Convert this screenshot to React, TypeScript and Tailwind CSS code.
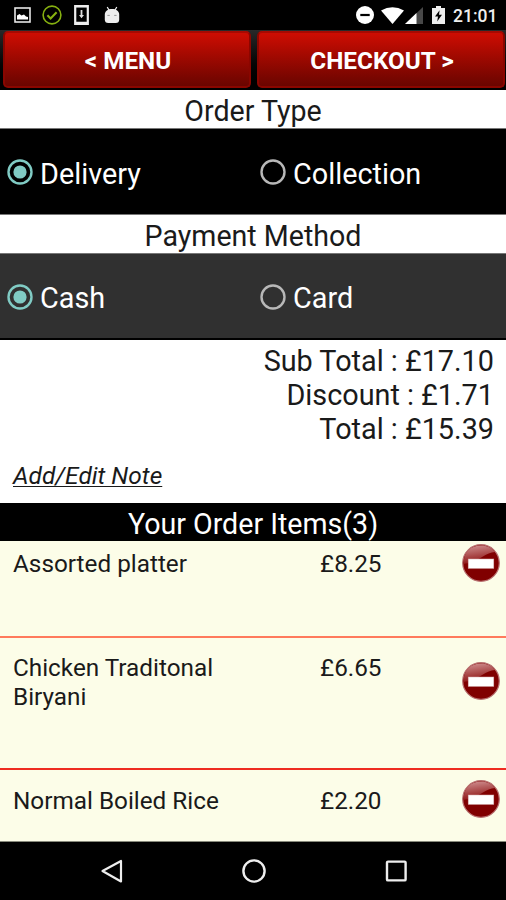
import { useState } from "react";

const items = [
  {
    name: "Assorted platter",
    price: "£8.25",
    row: "h-[96px] border-b-[2px] border-[#ff7a5c]",
    text: "pt-[7px]",
    icon: "mt-[2px]",
  },
  {
    name: "Chicken Traditonal Biryani",
    price: "£6.65",
    row: "h-[132px] border-b-[2px] border-[#ee2c20]",
    text: "pt-[15px]",
    icon: "mt-6",
  },
  {
    name: "Normal Boiled Rice",
    price: "£2.20",
    row: "h-[71px]",
    text: "pt-4",
    icon: "mt-[10px]",
  },
];

function StatusBar() {
  return (
    <div className="flex items-center h-[30px] bg-black shrink-0">
      {/* ── Notifications ── */}
      <svg className="w-[17px] h-[16px] ml-[14px]" viewBox="0 0 17 16">
        <rect x="1" y="1" width="15" height="14" fill="none" stroke="#e6e6e6" strokeWidth="1.6" />
        <path d="M3 12.6V8.6L5.6 7l1.8 1.6L10 7.4l2 2.2 2 .4v2.6z" fill="#fff" />
      </svg>
      <svg className="w-5 h-5 ml-[11px]" viewBox="0 0 20 20" fill="none" stroke="#86b010">
        <circle cx="10" cy="10" r="8.9" strokeWidth="1.6" />
        <path d="M5.4 10.2l3.2 3.2 6-6.2" strokeWidth="2.1" />
      </svg>
      <svg className="w-[15px] h-5 ml-3" viewBox="0 0 15 20">
        <rect x="1.2" y="1" width="12.6" height="18" fill="none" stroke="#eee" strokeWidth="2.2" />
        <path d="M1 1.4h13M1 18h13" stroke="#eee" strokeWidth="2.4" />
        <path d="M6.6 5h1.8v5h1.600l-2.500 3.200L5 10h1.600z" fill="#ddd" />
      </svg>
      <svg className="w-4 h-[18px] ml-[15px]" viewBox="0 0 16 18">
        <path d="M3.2 1l2 3.4M12.8 1l-2 3.4" stroke="#eee" strokeWidth="1.2" />
        <path d="M.8 8.6C.8 5 4 3 8 3s7.200 2 7.200 5.600v4.900q0 3.500-3.500 3.500H4.300Q.8 17 .8 13.500z" fill="#eee" />
        <path d="M3.400 9.400h2.400M10.200 9.400h2.400" stroke="#999" strokeWidth="1" />
      </svg>

      {/* ── System ── */}
      <svg className="w-[18px] h-[18px] ml-auto" viewBox="0 0 18 18">
        <circle cx="9" cy="9" r="9" fill="#fff" />
        <rect x="4.300" y="7.900" width="9.400" height="2.200" fill="#000" />
      </svg>
      <svg className="w-[23px] h-[17px] ml-[7px]" viewBox="0 0 23 17">
        <path d="M0 3.500Q11.500-3 23 3.500L11.500 17z" fill="#fff" />
      </svg>
      <svg className="w-[18px] h-[17px] ml-[1px]" viewBox="0 0 18 17">
        <path d="M18 0v17H0z" fill="#484848" />
        <path d="M11.500 6.100V17H0z" fill="#fff" />
      </svg>
      <svg className="w-[13px] h-[18px] ml-[9px]" viewBox="0 0 13 18">
        <path d="M4 0h5v2h4v16H0V2h4z" fill="#eee" />
        <path d="M7.600 4.200L3 10.400h3L5.200 15.400l4.800-6.600H7z" fill="#000" />
      </svg>
      <span className="ml-2 mr-[11px] w-[42px] text-[17.500px] leading-[30px] pt-[1px] font-medium text-[#eee] whitespace-nowrap">
        21:01
      </span>
    </div>
  );
}

function TopButton({ label }: { label: string }) {
  return (
    <button className="h-[57px] w-[248px] pt-[3px] pl-[2px] rounded-[5px] border-2 border-[#8a0600] border-t-[#a80a02] bg-linear-to-b from-[#cf0d02] to-[#6a0500] text-white text-[24.300px] leading-none font-bold">
      {label}
    </button>
  );
}

function SectionTitle({ label }: { label: string }) {
  return (
    <h2 className="h-[39px] shrink-0 bg-white border-b border-[#777] text-center text-[28.600px] leading-[42px] text-[#1a1a1a]">
      {label}
    </h2>
  );
}

function Radio({
  label,
  checked,
  onSelect,
}: {
  label: string;
  checked: boolean;
  onSelect: () => void;
}) {
  return (
    <button
      role="radio"
      aria-checked={checked}
      onClick={onSelect}
      className="flex items-center w-1/2 h-full pl-[7px] pt-[1px] text-[28.800px] leading-none text-white"
    >
      <svg className="w-[26px] h-[26px] mr-[7px]" viewBox="0 0 26 26">
        <circle cx="13" cy="13" r="11.500" fill="none" stroke={checked ? "#80cbc4" : "#b8b8b8"} strokeWidth="2.400" />
        {checked && <circle cx="13" cy="13" r="6.600" fill="#80cbc4" />}
      </svg>
      <span className="pt-1">{label}</span>
    </button>
  );
}

function RemoveIcon({ id }: { id: string }) {
  return (
    <svg className="w-[38px] h-[38px]" viewBox="0 0 38 38">
      <defs>
        <linearGradient id={id} x1="0.200" y1="0" x2="0.450" y2="1">
          <stop offset="0" stopColor="#d09090" />
          <stop offset="1" stopColor="#8a0d0d" />
        </linearGradient>
      </defs>
      <circle cx="19" cy="19" r="18.300" fill="#800000" stroke="#b87070" strokeWidth="1.200" />
      <path d="M1.800 20C1 8 9 1.400 19 1.400c6 0 11 2.600 14 6.600C24 9 18 15 12 17.500 8 19 4 19.500 1.800 20z" fill={`url(#${id})`} />
      <rect x="6.200" y="15" width="25.600" height="9.400" fill="#fff" stroke="#d8b0b0" strokeWidth=".5" />
    </svg>
  );
}

function NavBar() {
  return (
    <div className="flex items-center justify-center h-[58px] gap-[118px] pl-[2px] bg-black shrink-0">
      <svg className="w-6 h-6" viewBox="0 0 24 24" fill="none" stroke="#eee" strokeWidth="2.200" strokeLinejoin="round">
        <path d="M21 2v20.500L2.500 12z" />
      </svg>
      <svg className="w-6 h-6" viewBox="0 0 24 24" fill="none" stroke="#eee" strokeWidth="2.400">
        <circle cx="12" cy="12" r="10.600" />
      </svg>
      <svg className="w-6 h-6" viewBox="0 0 24 24" fill="none" stroke="#eee" strokeWidth="2.400">
        <rect x="3" y="2.600" width="18.600" height="18.800" rx="1" />
      </svg>
    </div>
  );
}

export default function App() {
  const [orderType, setOrderType] = useState("Delivery");
  const [payment, setPayment] = useState("Cash");

  return (
    <div className="flex flex-col w-[506px] h-[900px] overflow-hidden bg-black font-['Roboto',sans-serif]">
      <StatusBar />

      <div className="flex items-start h-[60px] shrink-0 pl-[3px] pt-[1px] gap-[6px] bg-linear-to-b from-[#292929] to-black">
        <TopButton label="< MENU" />
        <TopButton label="CHECKOUT >" />
      </div>

      <SectionTitle label="Order Type" />
      <div role="radiogroup" className="flex h-[86px] shrink-0 bg-black border-b border-[#777]">
        {["Delivery", "Collection"].map((o) => (
          <Radio key={o} label={o} checked={orderType === o} onSelect={() => setOrderType(o)} />
        ))}
      </div>

      <SectionTitle label="Payment Method" />
      <div role="radiogroup" className="flex h-[86px] shrink-0 bg-[#303030] border-b-2 border-black">
        {["Cash", "Card"].map((o) => (
          <Radio key={o} label={o} checked={payment === o} onSelect={() => setPayment(o)} />
        ))}
      </div>

      {/* ── Totals + note ── */}
      <div className="h-[163px] shrink-0 bg-white pt-1 pl-[13px] pr-3 text-[#1a1a1a]">
        <div className="text-right text-[28.800px] leading-[34px]">
          <p>Sub Total : £17.10</p>
          <p>Discount : £1.71</p>
          <p>Total : £15.39</p>
        </div>
        <a href="#note" className="inline-block mt-4 h-7 text-[24.500px] leading-7 italic underline decoration-1 underline-offset-2">
          Add/Edit Note
        </a>
      </div>

      <h2 className="h-[38px] shrink-0 text-center text-[28.600px] leading-[43px] text-white">
        Your Order Items(3)
      </h2>

      <div className="h-[301px] shrink-0 pt-[1px] bg-[#fcfde8] border-b border-[#888a7c]">
        {items.map((item, i) => (
          <div key={item.name} className={`flex items-start pl-[13px] pr-[6px] text-[24.300px] leading-[29px] text-[#1a1a1a] ${item.row}`}>
            <p className={`w-[307px] pr-20 ${item.text}`}>{item.name}</p>
            <p className={item.text}>{item.price}</p>
            <button aria-label="Remove" className={`ml-auto ${item.icon}`}>
              <RemoveIcon id={`shine${i}`} />
            </button>
          </div>
        ))}
      </div>

      <NavBar />
    </div>
  );
}
